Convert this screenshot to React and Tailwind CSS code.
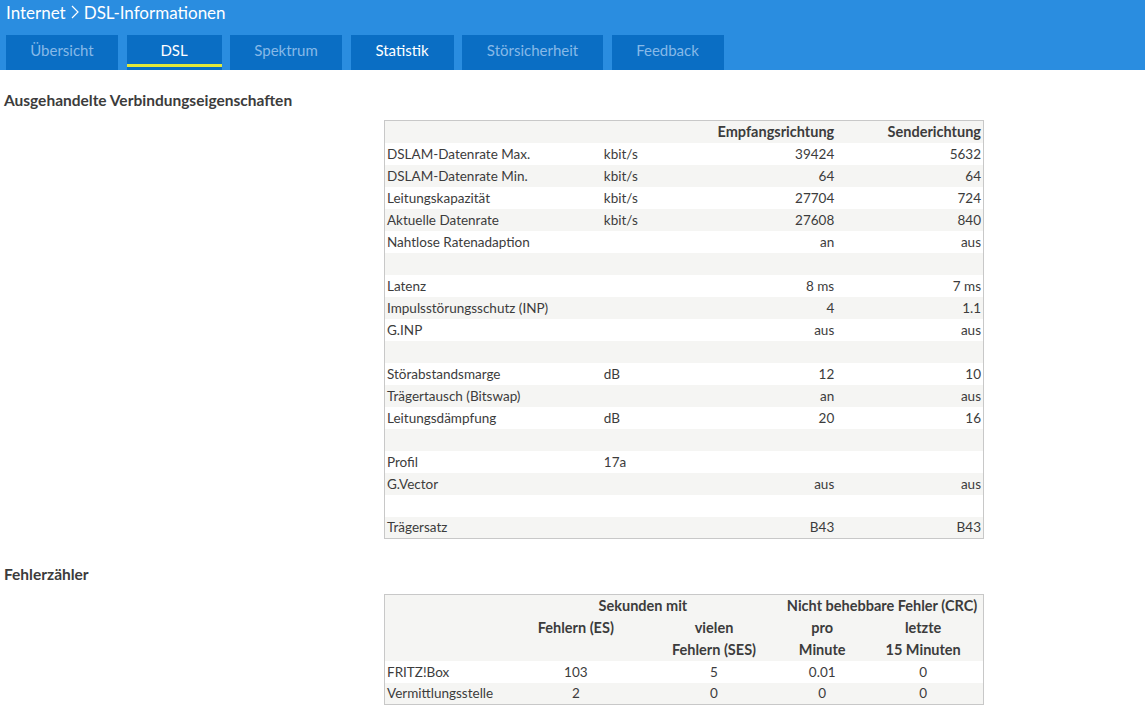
import React from "react";

const font = { fontFamily: '"Lato", "Open Sans", sans-serif' };

const rows1 = [
  ["DSLAM-Datenrate Max.", "kbit/s", "39424", "5632"],
  ["DSLAM-Datenrate Min.", "kbit/s", "64", "64"],
  ["Leitungskapazität", "kbit/s", "27704", "724"],
  ["Aktuelle Datenrate", "kbit/s", "27608", "840"],
  ["Nahtlose Ratenadaption", "", "an", "aus"],
  ["", "", "", ""],
  ["Latenz", "", "8 ms", "7 ms"],
  ["Impulsstörungsschutz (INP)", "", "4", "1.1"],
  ["G.INP", "", "aus", "aus"],
  ["", "", "", ""],
  ["Störabstandsmarge", "dB", "12", "10"],
  ["Trägertausch (Bitswap)", "", "an", "aus"],
  ["Leitungsdämpfung", "dB", "20", "16"],
  ["", "", "", ""],
  ["Profil", "17a", "", ""],
  ["G.Vector", "", "aus", "aus"],
  ["", "", "", ""],
  ["Trägersatz", "", "B43", "B43"],
];

const tabs = [
  { label: "Übersicht", w: "w-[112px]", cls: "text-[#86b9e8]" },
  { label: "DSL", w: "w-[95px]", cls: "text-white", active: true },
  { label: "Spektrum", w: "w-[112px]", cls: "text-[#86b9e8]" },
  { label: "Statistik", w: "w-[103px]", cls: "text-white" },
  { label: "Störsicherheit", w: "w-[141px]", cls: "text-[#86b9e8]" },
  { label: "Feedback", w: "w-[112px]", cls: "text-[#86b9e8]" },
];

export default function App() {
  return (
    <div className="w-[1145px] h-[711px] bg-white text-[#3c3c3c] overflow-hidden" style={font}>
      <div className="bg-[#2a8de0] h-[70px] flex flex-col">
        <div className="h-[35px] flex items-center pb-[11px] pl-[6px] text-white text-[17px] leading-none">
          <span>Internet</span>
          <svg width="12" height="16" viewBox="0 0 12 16" className="mx-[3px]">
            <path d="M3 2 L9 8 L3 14" fill="none" stroke="white" strokeWidth="1.2" />
          </svg>
          <span>DSL-Informationen</span>
        </div>
        <div className="flex h-[35px] pl-[6px] gap-[8.5px]">
          {tabs.map((t) => (
            <div key={t.label} className={`${t.w} h-[35px] bg-[#0a6ec4] relative flex items-center justify-center text-[15px] ${t.cls}`}>
              <span className="-mt-[4px]">{t.label}</span>
              {t.active && <div className="absolute left-0 right-0 bottom-[3px] h-[3px] bg-[#e2e83a]" />}
            </div>
          ))}
        </div>
      </div>

      <div className="pl-[4px]">
        <h2 className="font-bold text-[15.5px] h-[20px] mt-[20px] leading-[20px]">Ausgehandelte Verbindungseigenschaften</h2>
        <table className="ml-[380px] mt-[10px] w-[600px] table-fixed border-collapse border border-[#c8c8c8] text-[13.5px]">
          <colgroup>
            <col className="w-[217px]" />
            <col className="w-[90px]" />
            <col className="w-[145px]" />
            <col className="w-[146px]" />
          </colgroup>
          <tbody>
            <tr className="h-[22px] bg-[#f5f5f3] font-bold text-[14.5px]">
              <td></td>
              <td></td>
              <td className="text-right pr-[3px]">Empfangsrichtung</td>
              <td className="text-right pr-[2px]">Senderichtung</td>
            </tr>
            {rows1.map((r, i) => (
              <tr key={i} className={`h-[22px] ${i % 2 === 0 ? "bg-white" : "bg-[#f5f5f3]"}`}>
                <td className="pl-[2px] whitespace-nowrap">{r[0]}</td>
                <td className="pl-[2px]">{r[1]}</td>
                <td className="text-right pr-[3px]">{r[2]}</td>
                <td className="text-right pr-[2px]">{r[3]}</td>
              </tr>
            ))}
          </tbody>
        </table>

        <h2 className="font-bold text-[15.5px] h-[20px] mt-[25px] leading-[20px]">Fehlerzähler</h2>
        <table className="ml-[380px] mt-[10px] w-[600px] table-fixed border-collapse border border-[#c8c8c8] text-[13.5px]">
          <colgroup>
            <col className="w-[120px]" />
            <col className="w-[142px]" />
            <col className="w-[134px]" />
            <col className="w-[82px]" />
            <col className="w-[120px]" />
          </colgroup>
          <tbody>
            <tr className="h-[21px] bg-[#f5f5f3] font-bold text-[14.5px]">
              <td></td>
              <td colSpan={2} className="text-center">Sekunden mit</td>
              <td colSpan={2} className="text-center">Nicht behebbare Fehler (CRC)</td>
            </tr>
            <tr className="h-[21px] bg-[#f5f5f3] font-bold text-[14.5px] align-top">
              <td></td>
              <td className="text-center">Fehlern (ES)</td>
              <td className="text-center">vielen</td>
              <td className="text-center">pro</td>
              <td className="text-center">letzte</td>
            </tr>
            <tr className="h-[22px] bg-[#f5f5f3] font-bold text-[14.5px]">
              <td></td>
              <td></td>
              <td className="text-center">Fehlern (SES)</td>
              <td className="text-center">Minute</td>
              <td className="text-center">15 Minuten</td>
            </tr>
            <tr className="h-[22px] bg-white">
              <td className="pl-[2px] whitespace-nowrap">FRITZ!Box</td>
              <td className="text-center">103</td>
              <td className="text-center">5</td>
              <td className="text-center">0.01</td>
              <td className="text-center">0</td>
            </tr>
            <tr className="h-[22px] bg-[#f5f5f3]">
              <td className="pl-[2px] whitespace-nowrap">Vermittlungsstelle</td>
              <td className="text-center">2</td>
              <td className="text-center">0</td>
              <td className="text-center">0</td>
              <td className="text-center">0</td>
            </tr>
          </tbody>
        </table>
      </div>
    </div>
  );
}
